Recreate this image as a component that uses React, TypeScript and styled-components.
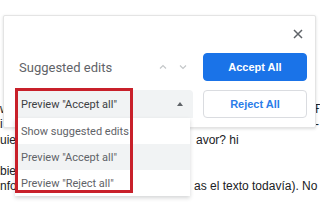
import React from 'react';
import styled, { createGlobalStyle } from 'styled-components';

const GlobalStyle = createGlobalStyle`
	html, body {
		margin: 0;
		padding: 0;
		background: #fff;
	}
	body {
		font-family: Roboto, 'Liberation Sans', Arial, sans-serif;
	}
`;

type Line = { left: string; right?: string; offset?: number };

const docLines: Line[] = [
	{ left: 'w', right: 'Ŧ', offset: 313 },
	{ left: 'i', right: '-', offset: 315 },
	{ left: 'uie', right: 'avor? hi', offset: 196 },
	{ left: '' },
	{ left: 'bie' },
	{ left: 'nfo', right: 'as el texto todavía). No', offset: 194 },
];

const menuItems = ['Show suggested edits', 'Preview "Accept all"', 'Preview "Reject all"'];

const Chevron: React.FC<{ up?: boolean }> = ({ up }) => (
	<svg width="8" height="6" viewBox="0 0 8 6">
		<path
			d={up ? 'M1 4.5 L4 1.5 L7 4.5' : 'M1 1.5 L4 4.5 L7 1.5'}
			fill="none"
			stroke="#c4c7c9"
			strokeWidth="1.2"
		/>
	</svg>
);

const App: React.FC = () => (
	<>
		<GlobalStyle />
		<Page>
			<Document>
				{docLines.map((line, i) => (
					<DocLine key={i}>
						<DocLeft>{line.left}</DocLeft>
						{line.right && <DocRight style={{ left: line.offset }}>{line.right}</DocRight>}
					</DocLine>
				))}
			</Document>

			<Panel>
				<Header>
					<CloseButton aria-label="Close">
						<svg width="10" height="10" viewBox="0 0 10 10">
							<path d="M1 1 L9 9 M9 1 L1 9" stroke="#5f6368" strokeWidth="1.5" />
						</svg>
					</CloseButton>
				</Header>
				<Controls>
					<LabelRow>
						<Label>Suggested edits</Label>
						<Stepper>
							<Chevron up />
							<Chevron />
						</Stepper>
					</LabelRow>
					<ActionButton $primary>Accept All</ActionButton>

					<SelectWrap>
						<Select>
							<span>Preview "Accept all"</span>
							<Caret />
						</Select>
						<Menu>
							{menuItems.map((item, i) => (
								<MenuItem key={item} $active={i === 1}>
									{item}
								</MenuItem>
							))}
						</Menu>
						<Highlight />
					</SelectWrap>
					<ActionButton>Reject All</ActionButton>
				</Controls>
			</Panel>
		</Page>
	</>
);

export default App;

/**
 * Styled components
 */

const Page = styled.div`
	position: relative;
	width: 320px;
	height: 208px;
	overflow: hidden;
	background: #fff;
`;

const Document = styled.div`
	padding-top: 102px;
	font-family: 'Liberation Sans', Arial, sans-serif;
	font-size: 12px;
	line-height: 15.4px;
	color: #202124;
`;

const DocLine = styled.div`
	position: relative;
	height: 15.4px;
	white-space: nowrap;
`;

const DocLeft = styled.span`
	display: inline-block;
`;

const DocRight = styled.span`
	position: absolute;
	top: 0;
`;

const Panel = styled.div`
	position: absolute;
	left: 3px;
	top: 15px;
	width: 313px;
	height: 113px;
	box-sizing: border-box;
	background: #fff;
	border: 1px solid #e4e4e4;
	border-radius: 2px;
	box-shadow: 0 1px 3px rgba(60, 64, 67, 0.18);
`;

const Header = styled.div`
	display: flex;
	justify-content: flex-end;
	height: 37px;
	padding-right: 12px;
`;

const CloseButton = styled.button`
	display: flex;
	align-items: center;
	justify-content: center;
	margin-top: 13px;
	width: 10px;
	height: 10px;
	padding: 0;
	border: none;
	background: none;
`;

const Controls = styled.div`
	display: grid;
	grid-template-columns: 178px 104px;
	grid-template-rows: 28px 28px;
	column-gap: 10px;
	row-gap: 9px;
	padding-left: 11px;
`;

const LabelRow = styled.div`
	display: flex;
	align-items: center;
	justify-content: space-between;
`;

const Label = styled.span`
	padding-left: 4px;
	font-size: 13px;
	color: #5f6368;
`;

const Stepper = styled.div`
	display: flex;
	align-items: center;
	gap: 12px;
	padding-right: 6px;
`;

const ActionButton = styled.button<{ $primary?: boolean }>`
	box-sizing: border-box;
	height: 28px;
	border-radius: 4px;
	border: 1px solid ${(p) => (p.$primary ? '#1a73e8' : '#dadce0')};
	background: ${(p) => (p.$primary ? '#1a73e8' : '#fff')};
	color: ${(p) => (p.$primary ? '#fff' : '#2b7de9')};
	font-family: 'Liberation Sans', Arial, sans-serif;
	font-size: 11px;
	font-weight: 700;
	padding: 0;
`;

const SelectWrap = styled.div`
	position: relative;
`;

const Select = styled.div`
	display: flex;
	align-items: center;
	justify-content: space-between;
	height: 28px;
	padding: 0 10px 0 6px;
	background: #f1f3f4;
	border-radius: 4px 4px 0 0;
	font-size: 11px;
	color: #3c4043;
`;

const Caret = styled.span`
	width: 0;
	height: 0;
	border-left: 3px solid transparent;
	border-right: 3px solid transparent;
	border-bottom: 4px solid #5f6368;
`;

const Menu = styled.div`
	position: absolute;
	top: 28px;
	left: 0;
	width: 175px;
	background: #fff;
	box-shadow: 0 2px 4px rgba(60, 64, 67, 0.22);
`;

const MenuItem = styled.div<{ $active?: boolean }>`
	display: flex;
	align-items: center;
	height: 26px;
	padding-left: 6px;
	font-size: 11px;
	color: #5f6368;
	background: ${(p) => (p.$active ? '#f1f3f4' : '#fff')};
`;

const Highlight = styled.div`
	position: absolute;
	left: 0;
	top: -2px;
	width: 118px;
	height: 105px;
	box-sizing: border-box;
	border: 3px solid #c8202a;
	pointer-events: none;
`;
